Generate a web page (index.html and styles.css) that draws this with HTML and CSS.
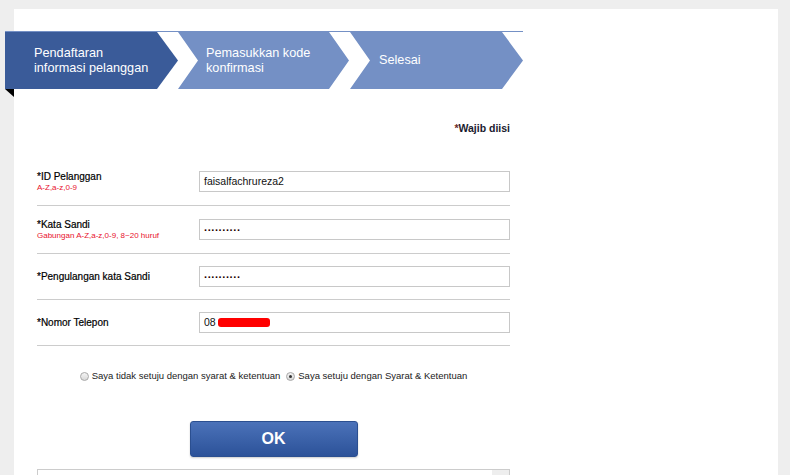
FILE: index.html
```html
<!DOCTYPE html>
<html lang="id">
<head>
<meta charset="UTF-8" />
<title>Pendaftaran</title>
<link rel="stylesheet" href="styles.css">
</head>
<body>

<div class="panel">
  <div class="steps">
    <div class="step step-first aktif"><span>Pendaftaran<br>informasi pelanggan</span></div>
    <div class="step step-mid"><span>Pemasukkan kode<br>konfirmasi</span></div>
    <div class="step step-last"><span>Selesai</span></div>
  </div>

  <div class="form">
    <p class="wajib"><em>*</em>Wajib diisi</p>

    <div class="row">
      <div class="label">
        *ID Pelanggan
        <small>A-Z,a-z,0-9</small>
      </div>
      <div class="field">faisalfachrureza2</div>
    </div>

    <div class="row">
      <div class="label">
        *Kata Sandi
        <small>Gabungan A-Z,a-z,0-9, 8~20 huruf</small>
      </div>
      <div class="field sandi">..........</div>
    </div>

    <div class="row">
      <div class="label">*Pengulangan kata Sandi</div>
      <div class="field sandi">..........</div>
    </div>

    <div class="row">
      <div class="label">*Nomor Telepon</div>
      <div class="field">08<span class="sensor"></span></div>
    </div>

    <div class="setuju">
      <label><span class="radio"></span>Saya tidak setuju dengan syarat &amp; ketentuan</label>
      <label><span class="radio dipilih"></span>Saya setuju dengan Syarat &amp; Ketentuan</label>
    </div>

    <div class="tombol">
      <button class="ok">OK</button>
    </div>

    <div class="syarat">
      <div class="scroll"></div>
    </div>
  </div>
</div>

</body>
</html>
```

FILE: styles.css
```css
/* dasar */
* {
  box-sizing: border-box;
}
body {
  margin: 0;
  background: #eeeeee;
  font-family: 'Liberation Sans', Arial, sans-serif;
  color: #111;
  overflow: hidden;
}
.panel {
  margin: 9px 0 0 14px;
  width: 764px;
  height: 466px;
  background: #fff;
  padding-top: 22px;
}

/* langkah pendaftaran */
.steps {
  position: relative;
  display: flex;
  width: 518px;
  margin-left: -9px;
  border-top: 1px solid #7490c5;
}
.steps::before {
  content: '';
  position: absolute;
  left: 0;
  top: 100%;
  border-top: 8px solid #000;
  border-left: 9px solid transparent;
}
.step {
  height: 57px;
  display: flex;
  align-items: center;
  background: #7490c5;
  color: #fff;
  font-size: 12.7px;
  line-height: 15px;
  padding-left: 29px;
}
.step-first {
  width: 173px;
  clip-path: polygon(0 0, 152px 0, 173px 28.5px, 152px 57px, 0 57px);
}
.step-mid {
  width: 172px;
  padding-left: 28px;
  clip-path: polygon(0 0, 151px 0, 171px 28.5px, 151px 57px, 0 57px, 20px 28.5px);
}
.step-last {
  width: 173px;
  clip-path: polygon(0 0, 152px 0, 173px 28.5px, 152px 57px, 0 57px, 20px 28.5px);
}
.aktif {
  background: #3a5b99;
}

/* formulir */
.form {
  width: 473px;
  margin-left: 23px;
}
.wajib {
  margin: 33px 0 23px;
  text-align: right;
  font-size: 10.5px;
  font-weight: bold;
  line-height: 13px;
  color: #1a1a2e;
}
.wajib em {
  font-style: normal;
  color: #6b2a2a;
}
.row {
  display: flex;
  align-items: center;
  padding: 12px 0;
  border-bottom: 1px solid #cccccc;
}
.label {
  width: 162px;
  font-size: 10px;
  line-height: 13px;
  color: #000;
  -webkit-text-stroke: 0.2px #000;
}
.label small {
  display: block;
  font-size: 8px;
  line-height: 10px;
  color: #e8112d;
  -webkit-text-stroke: 0;
}
.field {
  width: 311px;
  height: 21px;
  border: 1px solid #c8c8c8;
  padding-left: 4px;
  font-size: 10.5px;
  line-height: 19px;
  display: flex;
  align-items: center;
}
.sandi {
  font-weight: bold;
  font-size: 11px;
  letter-spacing: 0.6px;
  color: #200;
  padding-bottom: 4px;
}
.sensor {
  display: inline-block;
  width: 52px;
  height: 9px;
  margin-left: 2px;
  border-radius: 3px;
  background: #ff0000;
}

/* persetujuan */
.setuju {
  margin-top: 24px;
  display: flex;
  justify-content: center;
  gap: 6px;
  font-size: 9.5px;
  line-height: 12px;
  color: #222;
}
.setuju label {
  display: flex;
  align-items: center;
}
.radio {
  width: 9px;
  height: 9px;
  border-radius: 50%;
  border: 1px solid #a8a8a8;
  background: linear-gradient(#f4f4f4, #d8d8d8);
  margin-right: 3px;
  display: flex;
  align-items: center;
  justify-content: center;
}
.dipilih::after {
  content: '';
  width: 3px;
  height: 3px;
  border-radius: 50%;
  background: #333;
}

/* tombol */
.tombol {
  margin-top: 39px;
  text-align: center;
}
.ok {
  width: 168px;
  height: 36px;
  border: 1px solid #2b4f90;
  border-radius: 3px;
  background: linear-gradient(#4b72b9, #2c5299);
  color: #fff;
  font-family: 'Liberation Sans', Arial, sans-serif;
  font-size: 16px;
  font-weight: bold;
  box-shadow: 0 1px 2px #0003;
}

.syarat {
  margin-top: 12px;
  height: 6px;
  border: 1px solid #cccccc;
  border-bottom: 0;
  display: flex;
  justify-content: flex-end;
}
.scroll {
  width: 17px;
  background: #eeeeee;
}
```
